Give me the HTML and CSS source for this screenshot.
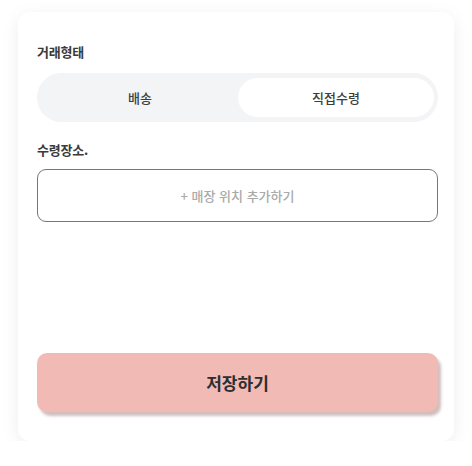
FILE: index.html
```html
<!DOCTYPE html>
<html lang="ko">
<head>
<meta charset="utf-8">
<link rel="stylesheet" href="styles.css">
</head>
<body>
<div class="card">
  <div class="label">거래형태</div>
  <div class="segment">
    <div class="seg-item">배송</div>
    <div class="seg-item active">직접수령</div>
  </div>
  <div class="label label-2">수령장소.</div>
  <div class="place">+ 매장 위치 추가하기</div>
  <button class="save">저장하기</button>
</div>
</body>
</html>
```
FILE: styles.css
```css
* { box-sizing: border-box; }
html, body { margin: 0; background: #fff; }
body {
  padding: 12px 18px 0 18px;
  font-family: "Noto Sans CJK KR", "Noto Sans", sans-serif;
  color: #333;
}
.card {
  width: 436px;
  height: 429px;
  background: #fff;
  border-radius: 12px;
  box-shadow: 0 4px 18px rgba(0,0,0,0.07);
  padding: 32px 16px 29px 19px;
  display: flex;
  flex-direction: column;
}
.label {
  font-size: 13px;
  line-height: 16px;
  font-weight: 700;
  color: #3a3a3a;
  letter-spacing: -0.2px;
}
.segment {
  margin-top: 13px;
  height: 49px;
  background: #f3f4f6;
  border-radius: 25px;
  padding: 5px 4px 5px 5px;
  display: grid;
  grid-template-columns: 1fr 1fr;
}
.seg-item {
  display: flex;
  align-items: center;
  justify-content: center;
  font-size: 13px;
  font-weight: 500;
  color: #3c3c3c;
  border-radius: 20px;
}
.seg-item.active {
  background: #fff;
}
.label-2 { margin-top: 20px; }
.place {
  margin-top: 11px;
  height: 53px;
  border: 1px solid #777;
  border-radius: 9px;
  display: flex;
  align-items: center;
  justify-content: center;
  font-size: 13px;
  font-weight: 500;
  color: #aaa;
}
.save {
  margin-top: auto;
  height: 59px;
  width: 401px;
  border: none;
  border-radius: 10px;
  background: #f2bab5;
  box-shadow: 3px 4px 3px rgba(120, 70, 70, 0.35);
  font-family: "Noto Sans CJK KR", "Noto Sans", sans-serif;
  font-size: 17px;
  font-weight: 700;
  color: #2e2e2e;
}
```
